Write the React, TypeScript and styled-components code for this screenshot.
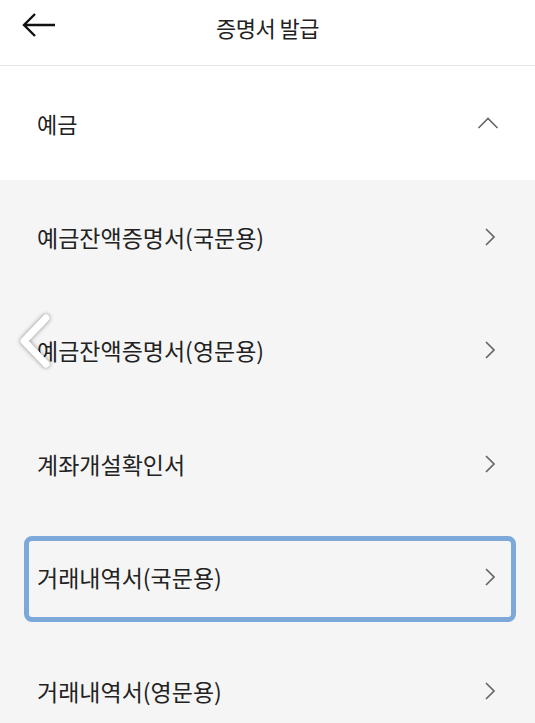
import React from "react";
import styled, { createGlobalStyle, css } from "styled-components";

const GlobalStyle = createGlobalStyle`
  html, body {
    margin: 0;
    padding: 0;
    background: #f5f5f5;
  }
  body {
    font-family: "Noto Sans CJK KR", "Noto Sans", sans-serif;
    color: #222;
  }
`;

const Page = styled.div`
  position: relative;
  width: 535px;
  height: 723px;
  overflow: hidden;
  background: #f5f5f5;
`;

const Header = styled.header`
  position: relative;
  height: 65px;
  background: #fff;
  border-bottom: 1px solid #e6e6e6;
  display: flex;
  align-items: center;
  justify-content: center;
`;

const BackButton = styled.button`
  position: absolute;
  left: 18px;
  top: 10px;
  width: 42px;
  height: 30px;
  border: 0;
  padding: 0;
  background: none;
  display: flex;
  align-items: center;
  justify-content: center;
`;

const Title = styled.h1`
  margin: 0 0 12px;
  font-size: 22px;
  font-weight: 400;
  color: #222;
  letter-spacing: -0.5px;
`;

const SectionHead = styled.div`
  height: 114px;
  background: #fff;
  display: flex;
  align-items: center;
  justify-content: space-between;
  padding: 0 36px 0 37px;
  font-size: 22px;
`;

const List = styled.ul`
  list-style: none;
  margin: 0;
  padding: 0;
`;

const Item = styled.li<{ $focused?: boolean }>`
  position: relative;
  height: 113.5px;
  display: flex;
  align-items: center;
  justify-content: space-between;
  padding: 0 37px 0 37px;
  font-size: 23px;
  color: #222;

  ${({ $focused }) =>
    $focused &&
    css`
      &::after {
        content: "";
        position: absolute;
        left: 24px;
        right: 19px;
        top: 15px;
        bottom: 12px;
        border: 5px solid #7ca8da;
        border-radius: 8px;
      }
    `}
`;

const Overlay = styled.div`
  position: absolute;
  left: 14px;
  top: 310px;
  width: 44px;
  height: 66px;
  filter: drop-shadow(0 0 2px rgba(0, 0, 0, 0.45));
`;

const Chevron = ({ dir }: { dir: "right" | "up" }) =>
  dir === "right" ? (
    <svg width="16" height="22" viewBox="0 0 16 22">
      <path d="M4 3 L12 11 L4 19" fill="none" stroke="#666" strokeWidth="1.7" />
    </svg>
  ) : (
    <svg width="22" height="16" viewBox="0 0 22 16">
      <path d="M1.5 13 L11 3.5 L20.5 13" fill="none" stroke="#666" strokeWidth="1.6" />
    </svg>
  );

const items = [
  "예금잔액증명서(국문용)",
  "예금잔액증명서(영문용)",
  "계좌개설확인서",
  "거래내역서(국문용)",
  "거래내역서(영문용)",
];

export default function App() {
  return (
    <>
      <GlobalStyle />
      <Page>
        <Header>
          <BackButton aria-label="뒤로">
            <svg width="36" height="26" viewBox="0 0 36 26">
              <path
                d="M34 13 H4 M14 2 L3 13 L14 24"
                fill="none"
                stroke="#111"
                strokeWidth="2.4"
              />
            </svg>
          </BackButton>
          <Title>증명서 발급</Title>
        </Header>
        <SectionHead>
          <span>예금</span>
          <Chevron dir="up" />
        </SectionHead>
        <List>
          {items.map((t, i) => (
            <Item key={t} $focused={i === 3}>
              <span>{t}</span>
              <Chevron dir="right" />
            </Item>
          ))}
        </List>
        <Overlay>
          <svg width="44" height="66" viewBox="0 0 44 66">
            <path
              d="M32 8 L10 31 L32 54"
              fill="none"
              stroke="#fff"
              strokeWidth="7"
              strokeLinecap="round"
              strokeLinejoin="round"
            />
          </svg>
        </Overlay>
      </Page>
    </>
  );
}
